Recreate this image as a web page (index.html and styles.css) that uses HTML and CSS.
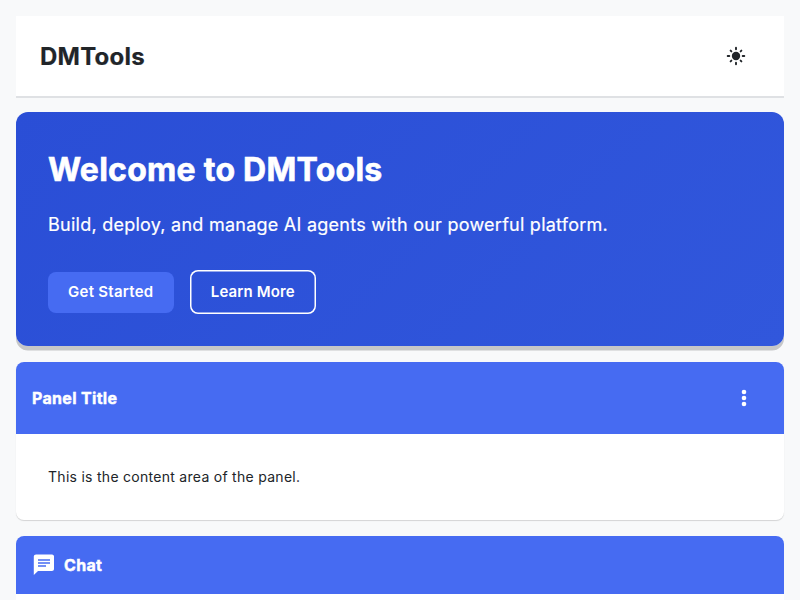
FILE: index.html
```html
<!DOCTYPE html>
<html lang="en">
<head>
<meta charset="utf-8">
<title>DMTools</title>
<link rel="stylesheet" href="styles.css">
</head>
<body>
<header class="header">
  <h1 class="brand">DMTools</h1>
  <button class="icon-button" aria-label="Theme">
    <svg width="24" height="24" viewBox="0 0 24 24" fill="currentColor"><circle cx="12" cy="12" r="4.2"/><path d="M12 3.7v1.6M12 18.7v1.6M3.7 12h1.6M18.7 12h1.6M6.6 6.6l.8.8M16.6 16.6l.8.8M6.6 17.4l.8-.8M16.6 7.4l.8-.8" stroke="currentColor" stroke-width="1.9" stroke-linecap="round"/></svg>
  </button>
</header>
<section class="hero">
  <h2 class="hero-title">Welcome to DMTools</h2>
  <p class="hero-text">Build, deploy, and manage AI agents with our powerful platform.</p>
  <div class="actions">
    <button class="btn primary">Get Started</button>
    <button class="btn outline">Learn More</button>
  </div>
</section>
<section class="panel">
  <div class="panel-head">
    <h3 class="panel-title">Panel Title</h3>
    <button class="icon-button" aria-label="More">
      <svg width="24" height="24" viewBox="0 0 24 24" fill="currentColor"><circle cx="12" cy="6" r="2.3"/><circle cx="12" cy="12" r="2.3"/><circle cx="12" cy="18" r="2.3"/></svg>
    </button>
  </div>
  <div class="panel-body">This is the content area of the panel.</div>
</section>
<section class="chat">
  <div class="chat-head">
    <svg width="24" height="24" viewBox="0 0 24 24" fill="currentColor"><path d="M20 1.5H4c-1.1 0-2.2.9-2.2 2L1.8 22l4.2-4h14c1.1 0 2-.9 2-2V3.5c0-1.1-.9-2-2-2zM6 9.2h12v1.6H6V9.2zm8 4.6H6v-1.6h8v1.6zm4-6H6V6.2h12v1.6z"/></svg>
    <h3 class="panel-title">Chat</h3>
  </div>
</section>
</body>
</html>
```
FILE: styles.css
```css
* { box-sizing: border-box; }
html { height: 100%; overflow: hidden; }
body { margin: 0; padding: 16px 16px 0; height: 600px; background: #f8f9fa; color: #212529; font-family: Inter, sans-serif; letter-spacing: .26px; display: flex; flex-direction: column; gap: 16px; overflow: hidden; }
h1, h2, h3, p { margin: 0; }
button { font-family: inherit; letter-spacing: inherit; }
.header { flex: none; height: 82px; margin-bottom: -2px; display: flex; align-items: center; justify-content: space-between; padding: 0 24px; background: #fff; border-bottom: 2px solid #dfe1e4; }
.brand { font-size: 24px; font-weight: 700; line-height: 36px; padding-top: 2px; -webkit-text-stroke: .2px currentColor; }
.icon-button { width: 48px; height: 40px; padding: 0; border: 0; background: none; color: inherit; display: flex; align-items: center; justify-content: center; }
.hero { flex: none; height: 234.4px; padding: 32px; border-radius: 12px; background: linear-gradient(135deg, #2a4ed6, #3157dc); color: #fff; box-shadow: 0 4.6px 0 rgba(0,0,0,.2); }
.hero-title { font-size: 32px; font-weight: 700; line-height: 52px; -webkit-text-stroke: .6px currentColor; }
.hero-text { margin-top: 14px; font-size: 18px; line-height: 29px; -webkit-text-stroke: .2px currentColor; letter-spacing: .25px; }
.actions { display: flex; align-items: center; gap: 16px; margin-top: 31px; }
.btn { height: 41px; padding: 0 20px 2px; border: 0; border-radius: 8px; font-size: 15px; font-weight: 600; color: #fff; background: #466bf2; }
.primary { width: 125.5px; }
.outline { width: 126.5px; height: 44px; padding: 0 0 2px; background: none; box-shadow: inset 0 0 0 1.5px #fff; letter-spacing: .12px; }
.panel { flex: none; height: 158px; border-radius: 8px; overflow: hidden; background: #fff; box-shadow: 0 1px 1px rgba(0,0,0,.15); }
.panel-head { height: 72px; padding: 0 16px; display: flex; align-items: center; justify-content: space-between; background: #466bf2; color: #fff; }
.panel-title { font-size: 16px; font-weight: 700; line-height: 24px; letter-spacing: .32px; -webkit-text-stroke: .4px currentColor; }
.panel-body { padding: 32px; font-size: 14px; line-height: 22px; letter-spacing: .28px; }
.chat { flex: 1; min-height: 0; border-radius: 8px 8px 0 0; overflow: hidden; background: #fff; }
.chat-head { height: 58px; padding: 0 16px; display: flex; align-items: center; gap: 8px; background: #466bf2; color: #fff; }
```
